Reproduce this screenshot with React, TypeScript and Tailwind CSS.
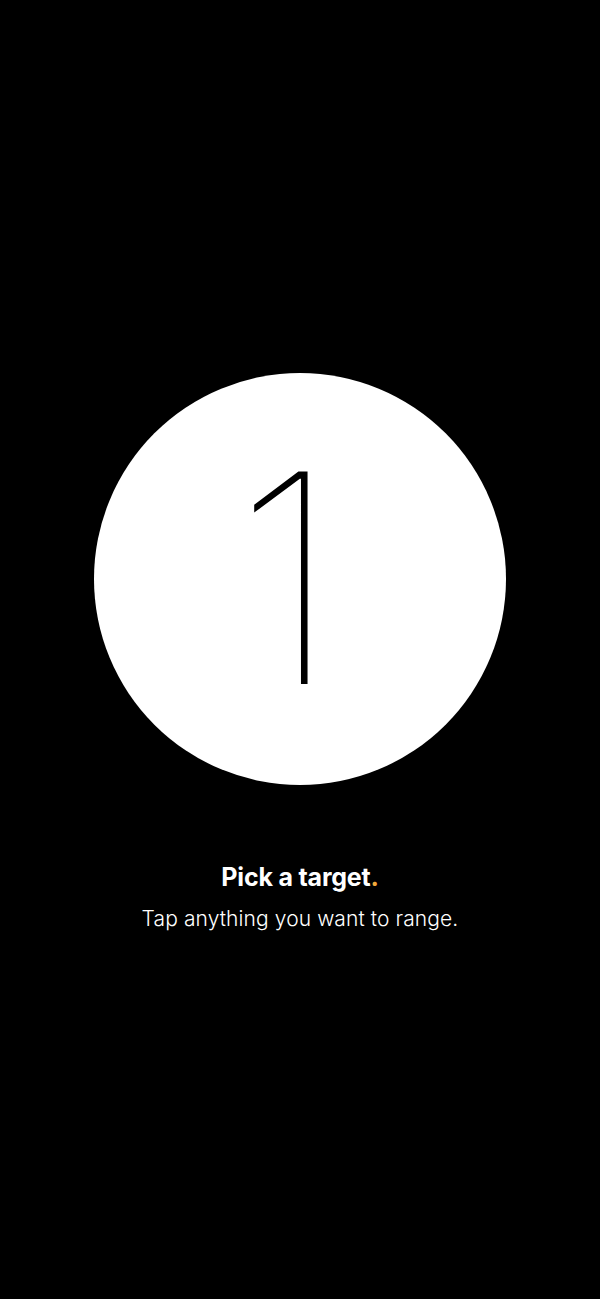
export default function App() {
  return (
    <div
      className="min-h-[1299px] w-full bg-black flex flex-col items-center pt-[373px]"
      style={{ fontFamily: "Inter, 'Noto Sans', sans-serif" }}
    >
      <div className="w-[412px] h-[412px] rounded-full bg-white flex items-center justify-center">
        <span className="text-[292px] leading-none font-[130] text-black -mt-[2px] -ml-[26px]">1</span>
      </div>
      <div className="mt-[76px] text-white text-[25px] font-bold leading-[32px] tracking-[-0.2px]">
        Pick a target<span className="text-[#f2a93b]">.</span>
      </div>
      <div className="mt-[12px] text-white text-[21px] font-light leading-[28px] tracking-[0.1px]">
        Tap anything you want to range.
      </div>
    </div>
  );
}
